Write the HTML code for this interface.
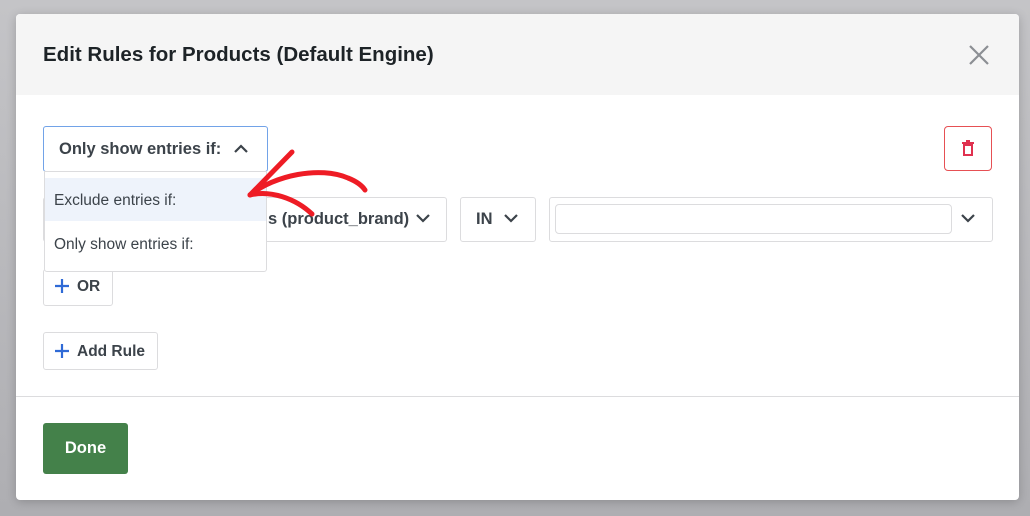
<!DOCTYPE html>
<html><head><style>
*{box-sizing:border-box;margin:0;padding:0}
body{width:1030px;height:516px;background:#b9b9bd;font-family:"Liberation Sans",Arial,sans-serif;position:relative;overflow:hidden}
.bg1{position:absolute;left:0;top:0;width:1030px;height:516px;background:linear-gradient(#c4c4c7,#aeaeb2)}
.modal{position:absolute;left:16px;top:14px;width:1003px;height:486px;background:#fff;border-radius:4px;box-shadow:0 2px 10px rgba(0,0,0,.2)}
.hdr{position:absolute;left:0;top:0;width:100%;height:81px;background:#f5f5f5;border-radius:4px 4px 0 0}
.title{position:absolute;left:27px;top:29px;font-size:20.5px;font-weight:bold;color:#1d2327}
.abs{position:absolute}
.box{position:absolute;border:1px solid #dcdcde;border-radius:3px;background:#fff}
.bt{font-weight:bold;color:#3c434a;font-size:16.5px}
</style></head><body>
<div class="bg1"></div>
<div class="modal">
 <div class="hdr"><div class="title">Edit Rules for Products (Default Engine)</div>
  <svg class="abs" style="left:952px;top:30px" width="22" height="22" viewBox="0 0 22 22"><path d="M2 2L20 20M20 2L2 20" stroke="#8c8f94" stroke-width="2.2"/></svg>
 </div>
 <div class="box" style="top:183px;width:404px;height:45px;left:27px"></div>
 <div class="abs bt" style="left:252px;top:196px">s (product_brand)</div>
 <svg class="abs" style="left:399px;top:198px" width="16" height="12"><path d="M2 3L8 9L14 3" stroke="#3c434a" stroke-width="2.2" fill="none"/></svg>
 <div class="box" style="left:444px;top:183px;width:76px;height:45px"></div>
 <div class="abs bt" style="left:460px;top:196px">IN</div>
 <svg class="abs" style="left:487px;top:198px" width="16" height="12"><path d="M2 3L8 9L14 3" stroke="#3c434a" stroke-width="2.2" fill="none"/></svg>
 <div class="box" style="left:533px;top:183px;width:444px;height:45px"></div>
 <div class="box" style="left:539px;top:190px;width:397px;height:30px;border-radius:4px"></div>
 <svg class="abs" style="left:944px;top:198px" width="16" height="12"><path d="M2 3L8 9L14 3" stroke="#3c434a" stroke-width="2.2" fill="none"/></svg>
 <div class="box" style="left:928px;top:112px;width:48px;height:45px;border-color:#e65054;border-radius:4px"></div>
 <svg class="abs" style="left:942px;top:124px" width="20" height="20" viewBox="0 0 20 20"><path d="M4 5H16M8 3H12" stroke="#e0314f" stroke-width="2"/><rect x="6" y="7" width="8" height="10" fill="none" stroke="#e0314f" stroke-width="2"/></svg>
 <div class="box" style="left:27px;top:255px;width:70px;height:37px"></div>
 <svg class="abs" style="left:39px;top:265px" width="14" height="14"><path d="M7 0V14M0 7H14" stroke="#2f6ad6" stroke-width="2.2"/></svg>
 <div class="abs bt" style="left:61px;top:264px;font-size:15.5px">OR</div>
 <div class="box" style="left:27px;top:318px;width:115px;height:38px"></div>
 <svg class="abs" style="left:39px;top:330px" width="14" height="14"><path d="M7 0V14M0 7H14" stroke="#2f6ad6" stroke-width="2.2"/></svg>
 <div class="abs bt" style="left:61px;top:329px;font-size:15.5px">Add Rule</div>
 <div class="abs" style="left:0;top:382px;width:100%;height:1px;background:#dcdcde"></div>
 <div class="abs" style="left:27px;top:409px;width:85px;height:51px;background:#44814a;border-radius:3px;color:#fff;font-weight:bold;font-size:16.5px;text-align:center;line-height:51px">Done</div>
 <div class="box" style="left:27px;top:112px;width:225px;height:46px;border:1.5px solid #72a3e8;border-radius:3px"></div>
 <div class="abs bt" style="left:43px;top:126px">Only show entries if:</div>
 <svg class="abs" style="left:217px;top:129px" width="16" height="12"><path d="M2 9L8 3L14 9" stroke="#3c434a" stroke-width="2.2" fill="none"/></svg>
 <div class="box" style="left:28px;top:157px;width:223px;height:101px;border-radius:0 0 3px 3px"></div>
 <div class="abs" style="left:29px;top:164px;width:221px;height:43px;background:#eef3fb"></div>
 <div class="abs" style="left:38px;top:178px;font-size:15.5px;color:#3c434a">Exclude entries if:</div>
 <div class="abs" style="left:38px;top:222px;font-size:15.5px;color:#3c434a">Only show entries if:</div>
 <svg class="abs" style="left:214px;top:126px" width="150" height="80"><g stroke="#ee1c25" stroke-width="5" fill="none" stroke-linecap="round" stroke-linejoin="round"><path d="M62 12L20 55"/><path d="M20 55C45 35 90 26 118 38C128 42 133 47 135 50"/><path d="M20 55C40 50 65 58 82 74"/></g></svg>
</div>
</body></html>
